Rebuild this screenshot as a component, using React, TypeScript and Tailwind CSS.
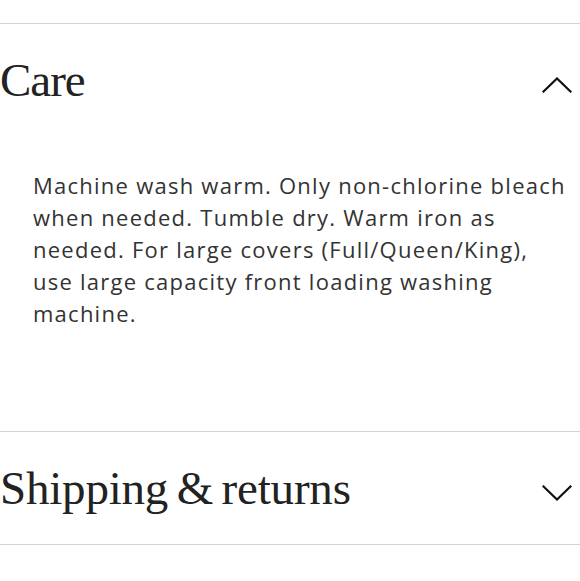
import React from "react";

function Chevron({ up }: { up?: boolean }) {
  return (
    <svg width="30" height="16" viewBox="0 0 30 16" fill="none" className="block">
      {up ? (
        <polyline points="1.5,14.5 15,1.5 28.5,14.5" stroke="#111" strokeWidth="2.2" strokeLinecap="square" />
      ) : (
        <polyline points="1.5,1.5 15,14.5 28.5,1.5" stroke="#111" strokeWidth="2.2" strokeLinecap="square" />
      )}
    </svg>
  );
}

export default function App() {
  return (
    <div className="w-[580px] h-[581px] bg-white overflow-hidden pt-[23px]">
      <div className="border-t border-[#d4d4d4]">
        <div className="h-[112px] flex items-center justify-between pr-[8px]">
          <h2 className="text-[47px] leading-none text-[#222] tracking-[-1px] font-['Liberation_Serif',serif]">Care</h2>
          <div className="mt-[10px]"><Chevron up /></div>
        </div>
        <div className="pl-[33px] pt-[33px] pb-[102px]">
          <p className="text-[22px] leading-[32px] text-[#333] tracking-[1.25px] font-['Open_Sans',sans-serif] whitespace-nowrap">
            Machine wash warm. Only non-chlorine bleach
            <br />
            when needed. Tumble dry. Warm iron as
            <br />
            needed. For large covers (Full/Queen/King),
            <br />
            use large capacity front loading washing
            <br />
            machine.
          </p>
        </div>
      </div>
      <div className="border-t border-b border-[#d4d4d4]">
        <div className="h-[112px] flex items-center justify-between pr-[8px]">
          <h2 className="text-[47px] leading-none text-[#222] tracking-[-0.2px] [word-spacing:-3px] font-['Liberation_Serif',serif]">Shipping &amp; returns</h2>
          <div className="mt-[10px]"><Chevron /></div>
        </div>
      </div>
    </div>
  );
}
